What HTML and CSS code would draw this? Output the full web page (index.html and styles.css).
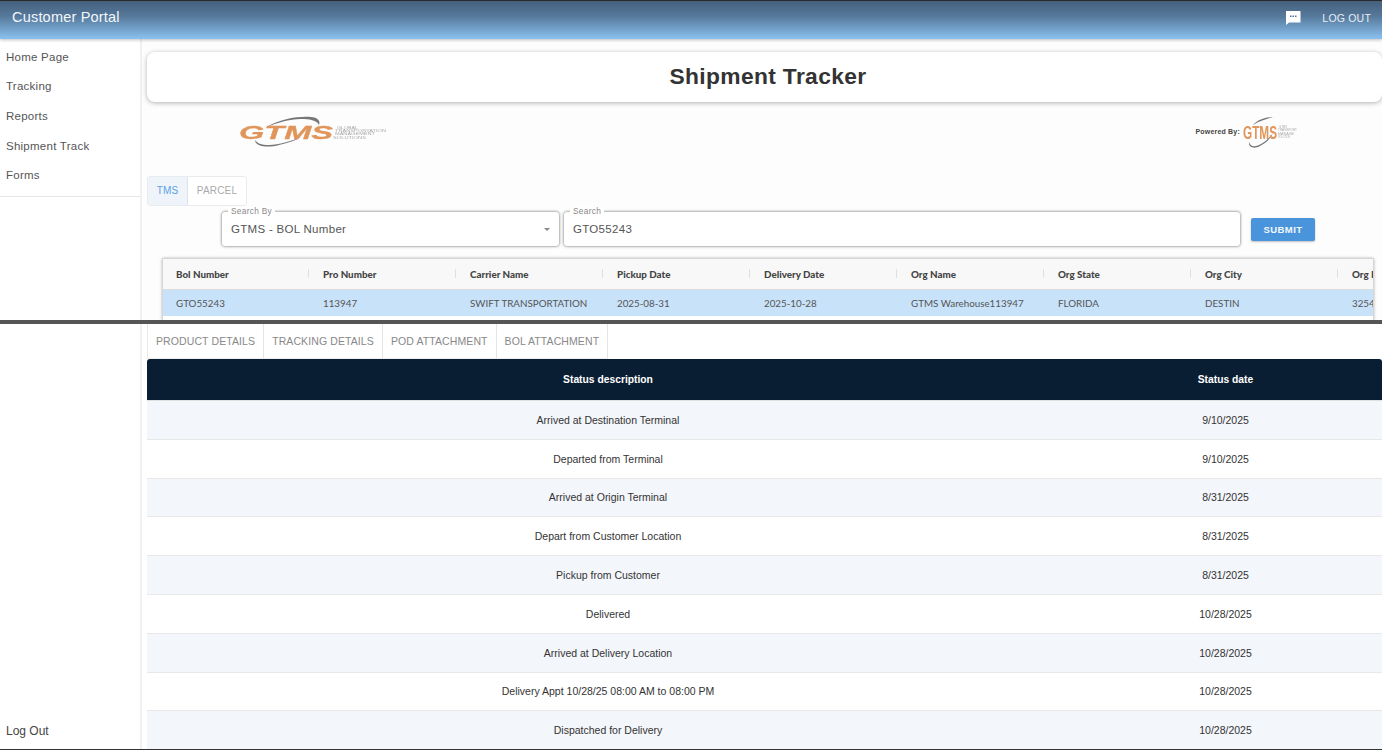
FILE: index.html
```html
<!DOCTYPE html>
<html lang="en">
<head>
<meta charset="utf-8">
<title>Customer Portal</title>
<link rel="stylesheet" href="styles.css">
</head>
<body>
<div class="app">
  <section class="pane-top">
    <header class="appbar">
      <span class="brand">Customer Portal</span>
      <svg class="chat-icon" viewBox="0 0 16 16" width="16" height="16"><path d="M1 1h14.500v11.500H4L1 15z" fill="#fff"/><rect x="5" y="5.500" width="1.500" height="1.500" fill="#4f7396"/><rect x="7.500" y="5.500" width="1.500" height="1.500" fill="#4f7396"/><rect x="10" y="5.500" width="1.500" height="1.500" fill="#4f7396"/></svg>
      <span class="logout-top">LOG OUT</span>
    </header>
    <div class="top-body">
      <nav class="side side-top">
        <a>Home Page</a>
        <a>Tracking</a>
        <a>Reports</a>
        <a>Shipment Track</a>
        <a>Forms</a>
      </nav>
      <main class="top-main">
        <div class="title-card"><h1>Shipment Tracker</h1></div>
        <div class="logos">
          <svg class="logo-left" viewBox="0 0 150 36" width="150" height="36">
            <path d="M28 12C40 4 60 1 72 2C78 2 82 6 80 10C78 5 70 4 62 4C50 4 38 8 28 12Z" fill="#777"/>
            <path d="M16 25C16 32 30 33 40 30C48 28 56 26 62 22C52 26 40 30 30 30C22 30 18 28 16 25Z" fill="#777"/>
            <text class="logo-word" x="0" y="24" textLength="94" lengthAdjust="spacingAndGlyphs">GTMS</text>
            <text class="logo-small" x="98" y="13.500" textLength="21" lengthAdjust="spacingAndGlyphs">GLOBAL</text>
            <text class="logo-small" x="96" y="16.800" textLength="51" lengthAdjust="spacingAndGlyphs">TRANSPORTATION</text>
            <text class="logo-small" x="96" y="20.200" textLength="40" lengthAdjust="spacingAndGlyphs">MANAGEMENT</text>
            <text class="logo-small" x="94" y="23.600" textLength="33" lengthAdjust="spacingAndGlyphs">SOLUTIONS</text>
          </svg>
          <div class="powered">
            <span class="powered-label">Powered By:</span>
            <svg class="logo-right" viewBox="0 0 56 36" width="56" height="36">
              <path d="M10 10C14 5 22 2 30 2C24 4 16 6 10 10Z" fill="#777"/>
              <path d="M6 27C5 33 12 34 17 31C23 28 27 24 30 18C25 25 18 30 13 31C9 32 7 30 6 27Z" fill="#777"/>
              <text class="logo-word-sm" x="0" y="24" textLength="34" lengthAdjust="spacingAndGlyphs">GTMS</text>
              <text class="logo-small-sm" x="36" y="12.500" textLength="8" lengthAdjust="spacingAndGlyphs">GTMS</text>
              <text class="logo-small-sm" x="35" y="16" textLength="19" lengthAdjust="spacingAndGlyphs">TRANSPORT</text>
              <text class="logo-small-sm" x="35" y="19.500" textLength="16" lengthAdjust="spacingAndGlyphs">MANAGE</text>
              <text class="logo-small-sm" x="35" y="23" textLength="12" lengthAdjust="spacingAndGlyphs">SOLUTION</text>
            </svg>
          </div>
        </div>
        <div class="mode-tabs"><span class="mode active">TMS</span><span class="mode">PARCEL</span></div>
        <div class="search-row">
          <div class="field field-select">
            <span class="field-label">Search By</span>
            <span class="field-value">GTMS - BOL Number</span>
            <span class="caret"></span>
          </div>
          <div class="field field-search">
            <span class="field-label">Search</span>
            <span class="field-value">GTO55243</span>
          </div>
          <button class="submit" type="button">SUBMIT</button>
        </div>
        <div class="grid">
          <div class="grid-row grid-head">
            <div class="gc">Bol Number</div><div class="gc">Pro Number</div><div class="gc">Carrier Name</div><div class="gc">Pickup Date</div><div class="gc">Delivery Date</div><div class="gc">Org Name</div><div class="gc">Org State</div><div class="gc">Org City</div><div class="gc">Org Postal</div>
          </div>
          <div class="grid-row grid-selected">
            <div class="gc">GTO55243</div><div class="gc">113947</div><div class="gc">SWIFT TRANSPORTATION</div><div class="gc">2025-08-31</div><div class="gc">2025-10-28</div><div class="gc">GTMS Warehouse113947</div><div class="gc">FLORIDA</div><div class="gc">DESTIN</div><div class="gc">32541</div>
          </div>
        </div>
      </main>
    </div>
  </section>
  <div class="divider"></div>
  <section class="pane-bottom">
    <nav class="side side-bottom"><a>Log Out</a></nav>
    <main class="bottom-main">
      <div class="detail-tabs">
        <span class="dtab">PRODUCT DETAILS</span><span class="dtab">TRACKING DETAILS</span><span class="dtab">POD ATTACHMENT</span><span class="dtab">BOL ATTACHMENT</span>
      </div>
      <div class="status-table">
        <div class="st-row st-head"><div>Status description</div><div>Status date</div></div>
        <div class="st-row"><div>Arrived at Destination Terminal</div><div>9/10/2025</div></div>
        <div class="st-row"><div>Departed from Terminal</div><div>9/10/2025</div></div>
        <div class="st-row"><div>Arrived at Origin Terminal</div><div>8/31/2025</div></div>
        <div class="st-row"><div>Depart from Customer Location</div><div>8/31/2025</div></div>
        <div class="st-row"><div>Pickup from Customer</div><div>8/31/2025</div></div>
        <div class="st-row"><div>Delivered</div><div>10/28/2025</div></div>
        <div class="st-row"><div>Arrived at Delivery Location</div><div>10/28/2025</div></div>
        <div class="st-row"><div>Delivery Appt 10/28/25 08:00 AM to 08:00 PM</div><div>10/28/2025</div></div>
        <div class="st-row"><div>Dispatched for Delivery</div><div>10/28/2025</div></div>
      </div>
    </main>
  </section>
</div>
</body>
</html>
```
FILE: styles.css
```css
* { box-sizing: border-box; }
html, body { margin: 0; height: 100%; overflow: hidden; background: #fff; }
body { font-family: "Liberation Sans", Arial, sans-serif; color: #333; }
.app { width: 1382px; height: 750px; display: flex; flex-direction: column; border-bottom: 1px solid #333; overflow: hidden; }

.pane-top { height: 320px; flex: none; display: flex; flex-direction: column; overflow: hidden; }
.appbar { height: 39px; flex: none; display: flex; align-items: center; padding: 0 11px 6px 12px; color: #fff;
  border-top: 1px solid #2a2a2a;
  background: linear-gradient(180deg, #46607e 0%, #56799b 40%, #8ac1f0 100%);
  box-shadow: 0 1px 3px rgba(0,0,0,.25); position: relative; z-index: 2; }
.brand { font-size: 14.500px; letter-spacing: .2px; color: #f2f6fa; }
.chat-icon { margin-left: auto; margin-right: 21px; margin-top: 1px; }
.logout-top { font-size: 10.500px; letter-spacing: .2px; color: #e8eef5; margin-top: 1px; }

.top-body { flex: 1; display: flex; min-height: 0; }
.side { width: 142px; flex: none; border-right: 2px solid #f0f0f0; background: #fff; }
.side a { display: block; font-size: 11.500px; letter-spacing: .25px; color: #555; padding-left: 6px; height: 29.600px; line-height: 29.600px; }
.side-top { padding-top: 3.800px; position: relative; }
.side-top::after { content: ""; position: absolute; left: 0; right: 0; top: 157px; border-top: 1px solid #e6e6e6; }

.top-main { flex: 1; min-width: 0; padding: 13px 0 0 5px; background: #fdfdfd; display: flex; flex-direction: column; }
.title-card { width: 1235px; height: 50px; flex: none; background: #fff; border-radius: 8px; box-shadow: 0 1px 5px rgba(0,0,0,.3); display: flex; align-items: center; justify-content: center; padding: 0 0 2px 7px; }
.title-card h1 { margin: 0; font-size: 22.800px; font-weight: 700; letter-spacing: .35px; color: #333; }

.logos { height: 74px; flex: none; display: flex; justify-content: space-between; padding: 13px 83px 0 92px; }
.logo-word { font: italic 700 18.500px "Liberation Sans", Arial, sans-serif; fill: #e0955a; stroke: #e0955a; stroke-width: .3px; }
.logo-small { font: 3.500px "Liberation Sans", Arial, sans-serif; fill: #aaa; }
.logo-left, .logo-right { filter: blur(.35px); }
.powered { display: flex; align-items: flex-start; gap: 3px; }
.powered-label { font-size: 7px; font-weight: 700; letter-spacing: .2px; color: #444; margin-top: 13px; }
.logo-word-sm { font: 700 18px "Liberation Sans", Arial, sans-serif; fill: #e0955a; }
.logo-small-sm { font: 2.800px "Liberation Sans", Arial, sans-serif; fill: #aaa; }

.mode-tabs { display: flex; align-self: flex-start; height: 30px; flex: none; border: 1px solid #e9ecef; border-radius: 3px; background: #fff; }
.mode { display: flex; align-items: center; justify-content: center; font-size: 10px; letter-spacing: .2px; color: #aaa; width: 58px; padding-bottom: 1px; }
.mode.active { width: 40px; background: #eff4fb; color: #5c9fe2; border-right: 1px solid #dde3ea; }

.search-row { display: flex; align-items: flex-start; padding-left: 75px; margin-top: 5px; height: 42px; flex: none; }
.field { position: relative; height: 34px; background: #fff; border-radius: 3px; box-shadow: 0 0 3px rgba(0,0,0,.65); display: flex; align-items: center; padding-left: 9px; margin-top: 1px; }
.field-select { width: 337px; margin-right: 5px; }
.field-search { width: 676px; }
.field-label { position: absolute; top: -5px; left: 6px; padding: 0 3px; background: #fff; font-size: 8.300px; line-height: 9px; letter-spacing: .3px; color: #888; }
.field-value { font-size: 11.500px; letter-spacing: .3px; color: #555; }
.caret { position: absolute; right: 9px; top: 16px; border: 3.500px solid transparent; border-top-color: #888; border-bottom: 0; }
.submit { margin: 7px 0 0 11px; width: 64px; height: 23px; border: 0; border-radius: 2px; background: #4a94dc; color: #f2f8fe; font: 700 9.500px "Liberation Sans", Arial, sans-serif; letter-spacing: .4px; box-shadow: 0 1px 2px rgba(0,0,0,.25); padding: 0; }

.grid { width: 1212px; margin: 5px 0 0 15px; flex: 1; min-height: 0; border: 1px solid #d5d5d5; border-bottom: 0; border-radius: 2px 2px 0 0; box-shadow: 0 0 3px rgba(0,0,0,.3); overflow: hidden; background: #fff; }
.grid-row { display: flex; width: 1400px; }
.gc { width: 147px; flex: none; padding-left: 13px; font-family: Lato, "Liberation Sans", sans-serif; font-size: 9.800px; white-space: nowrap; position: relative; }
.grid-head { height: 31px; align-items: center; background: #f8f8f8; border-bottom: 1px solid #dcdcdc; color: #444; }
.grid-head .gc { font-weight: 900; }
.grid-head .gc::after { content: ""; position: absolute; right: 1px; top: 1px; height: 9px; border-right: 1px solid #e0e0e0; }
.grid-selected { height: 26px; align-items: center; background: #c8e2f9; color: #555; }

.divider { height: 4px; flex: none; background: #555; }

.pane-bottom { flex: 1; min-height: 0; display: flex; overflow: hidden; }
.side-bottom { display: flex; flex-direction: column; justify-content: flex-end; padding-bottom: 2px; }
.side-bottom a { font-size: 12px; letter-spacing: 0; color: #444; }
.bottom-main { flex: 1; min-width: 0; padding-left: 5px; overflow: hidden; }
.detail-tabs { display: flex; height: 35px; border-left: 1px solid #e9e9e9; }
.dtab { font-size: 10.500px; letter-spacing: .1px; color: #888; padding: 0 8px; display: flex; align-items: center; border-right: 1px solid #e5e5e5; border-bottom: 1px solid #eee; }
.status-table { width: 1235px; }
.st-row { display: grid; grid-template-columns: 922px 313px; height: 38.800px; align-items: center; text-align: center; font-size: 10.500px; color: #333; border-bottom: 1px solid #e8e8e8; background: #fff; }
.st-row:nth-child(even) { background: #f3f6fb; }
.st-row.st-head { height: 42px; background: #0a1e33; color: #fff; font-weight: 700; font-size: 10.300px; border-radius: 3px 3px 0 0; border-bottom: 1px solid #e0e0e0; }
```
